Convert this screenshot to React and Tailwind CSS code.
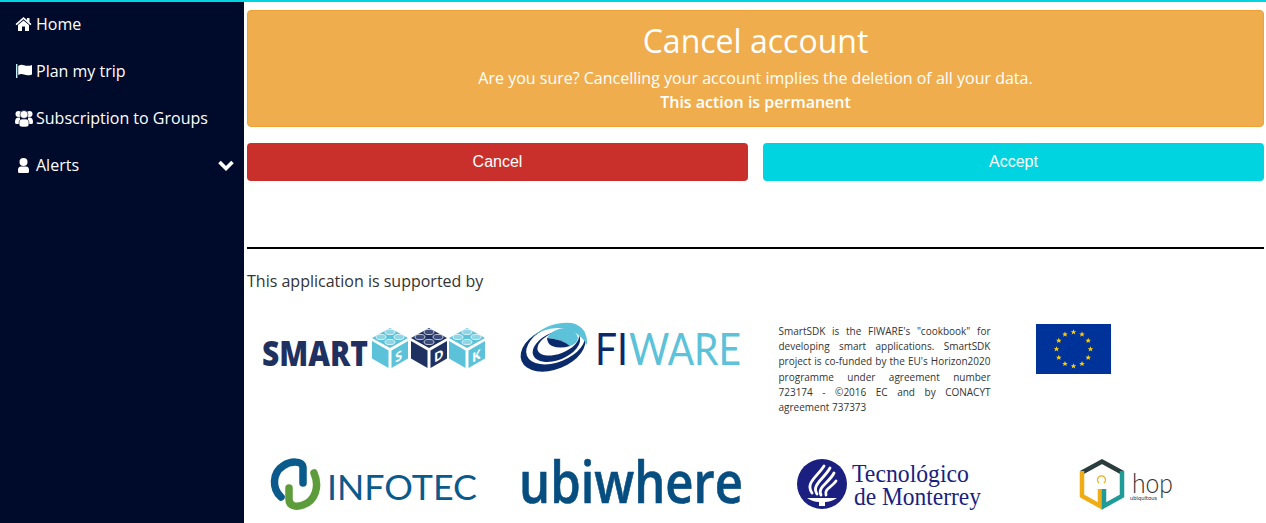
import React from "react";

// glyphicon-like menu icons, 20x20 box
const HomeIcon = () => (
  <svg width="20" height="20" viewBox="0 0 20 20" fill="currentColor">
    <path d="M9.5 3 L13 6 V4 H15.5 V8.2 L17.5 10 L16.4 11.2 L9.5 5.2 L2.6 11.2 L1.5 10 Z" />
    <path d="M4 11 L9.5 6.4 L15 11 V17 H11 V12.5 H8 V17 H4 Z" />
  </svg>
);

const FlagIcon = () => (
  <svg width="20" height="20" viewBox="0 0 20 20" fill="currentColor">
    <rect x="2" y="3" width="1.4" height="14" fill="#bfeff8" />
    <path d="M4.2 5 Q7 3 10 4.2 Q14 5.6 18 4 V13.4 Q14 15 10 13.6 Q7 12.4 4.2 14 Z" />
  </svg>
);

const UsersIcon = () => (
  <svg width="20" height="20" viewBox="0 0 20 20" fill="currentColor">
    <circle cx="4.5" cy="6" r="3" />
    <circle cx="15.5" cy="6" r="3" />
    <path d="M1 14 Q1 9.5 4.5 9.5 H6 V16 H2 Q1 16 1 14 Z" />
    <path d="M19 14 Q19 9.5 15.5 9.5 H14 V16 H18 Q19 16 19 14 Z" />
    <circle cx="10" cy="6.5" r="4" stroke="#000b2b" strokeWidth="0.6" />
    <path d="M5 16 Q5 11 8 11 H12 Q15 11 15 16 Q15 19 12 19 H8 Q5 19 5 16 Z" stroke="#000b2b" strokeWidth="0.6" />
  </svg>
);

const UserIcon = () => (
  <svg width="20" height="20" viewBox="0 0 20 20" fill="currentColor">
    <circle cx="9.5" cy="7" r="4" />
    <path d="M4 15 Q4 11.5 7 11.5 H12 Q15 11.5 15 15 V16.5 Q15 18 13.5 18 H5.5 Q4 18 4 16.5 Z" />
  </svg>
);

const menu = [
  { label: "Home", Icon: HomeIcon },
  { label: "Plan my trip", Icon: FlagIcon },
  { label: "Subscription to Groups", Icon: UsersIcon },
  { label: "Alerts", Icon: UserIcon, arrow: true },
];

function Sidebar() {
  return (
    <aside className="w-[244px] shrink-0 bg-[#000b2b] text-white">
      {menu.map(({ label, Icon, arrow }) => (
        <div key={label} className="flex h-[47px] items-start pt-[11px] text-[16px] leading-[22px]">
          <span className="flex h-[22px] w-[36px] shrink-0 items-center pl-[14px]">
            <Icon />
          </span>
          <span className="flex-1">{label}</span>
          {arrow && (
            <span className="flex h-[22px] items-center pr-[10px]">
              <svg width="16" height="11" viewBox="0 0 16 11" fill="none" stroke="currentColor" strokeWidth="3.6">
                <path d="M1.5 2 L8 8.5 L14.5 2" />
              </svg>
            </span>
          )}
        </div>
      ))}
    </aside>
  );
}

function Cube({ x, light, letter }) {
  const top = light ? "#5cc2d9" : "#1f3161";
  const stud = light ? "#8fd6e5" : "#3a4b7c";
  return (
    <g transform={`translate(${x} 0)`}>
      <polygon points="18,2 36,12 18,22 0,12" fill={top} />
      {[[18, 6], [9, 11], [27, 11], [18, 16]].map(([cx, cy]) => (
        <ellipse key={`${cx}-${cy}`} cx={cx} cy={cy} rx="5" ry="2.6" fill={stud} stroke="#ffffff" strokeWidth="0.7" />
      ))}
      <polygon points="0,15 16.5,24.5 16.5,42 0,32.5" fill={top} />
      <polygon points="19.5,24.5 36,15 36,32.5 19.5,42" fill={top} />
      <text
        transform="translate(23 37) skewY(-30)"
        fontFamily="'Open Sans', sans-serif"
        fontWeight="700"
        fontSize="13"
        fill="#ffffff"
      >
        {letter}
      </text>
    </g>
  );
}

function SmartLogo() {
  return (
    <svg width="224" height="44" viewBox="0 0 224 44" className="overflow-visible">
      <text
        x="0"
        y="40"
        fontFamily="'Open Sans', sans-serif"
        fontWeight="800"
        fontSize="36"
        fill="#1f3161"
        textLength="106"
        lengthAdjust="spacingAndGlyphs"
      >
        SMART
      </text>
      <Cube x={110} light letter="S" />
      <Cube x={149} letter="D" />
      <Cube x={187} light letter="K" />
    </svg>
  );
}

function FiwareLogo() {
  return (
    <svg width="222" height="54" viewBox="0 0 222 54" className="overflow-visible">
      <g transform="rotate(-22 34 27)">
        <ellipse cx="33" cy="27" rx="34" ry="21" fill="#0b2a6b" />
        <ellipse cx="37" cy="24" rx="31" ry="18" fill="#ffffff" />
        <ellipse cx="37" cy="26" rx="25" ry="14" fill="#0b2a6b" />
        <ellipse cx="40" cy="23.5" rx="22" ry="11" fill="#ffffff" />
      </g>
      <path d="M10 18 Q28 0 52 2 Q68 6 67 24 Q58 8 38 7 Q22 7 10 18 Z" fill="#5cc2d9" />
      <path d="M27 17 Q32 8 45 7 Q56 8 58 17 Q57 23 50 25 Q42 18 27 17 Z" fill="#5cc2d9" />
      <path d="M27 17 Q42 18 50 25 Q40 28 32 25 Q27 22 27 17 Z" fill="#0b2a6b" />
      <text
        x="75"
        y="44"
        fontFamily="Lato, sans-serif"
        fontWeight="400"
        fontSize="45"
        fill="#0b2a6b"
        textLength="33"
        lengthAdjust="spacingAndGlyphs"
      >
        FI
      </text>
      <text
        x="109"
        y="44"
        fontFamily="Lato, sans-serif"
        fontWeight="400"
        fontSize="45"
        fill="#5cc2d9"
        textLength="112"
        lengthAdjust="spacingAndGlyphs"
      >
        WARE
      </text>
    </svg>
  );
}

function EuFlag() {
  const stars = Array.from({ length: 12 }, (_, i) => {
    const a = (i * Math.PI) / 6;
    return { x: 37.5 + 17 * Math.sin(a), y: 25 - 17 * Math.cos(a) };
  });
  return (
    <svg width="75" height="50" viewBox="0 0 75 50">
      <rect width="75" height="50" fill="#003399" />
      {stars.map((s, i) => (
        <polygon
          key={i}
          transform={`translate(${s.x} ${s.y}) scale(1.4)`}
          points="0,-2 0.6,-0.6 2,-0.6 0.9,0.3 1.3,1.7 0,0.9 -1.3,1.7 -0.9,0.3 -2,-0.6 -0.6,-0.6"
          fill="#ffcc00"
        />
      ))}
    </svg>
  );
}

function InfotecLogo() {
  return (
    <svg width="208" height="52" viewBox="0 0 208 52" className="overflow-visible">
      <path d="M11 38 C2 30 2 14 13 7 C20 2 33 1 33 9 V24" fill="none" stroke="#0b5a8c" strokeWidth="7.5" strokeLinecap="round" />
      <path d="M19 29 V40 C19 48 27 48 33 46 C45 42 50 28 44 14" fill="none" stroke="#5d9c3a" strokeWidth="7.5" strokeLinecap="round" />
      <text
        x="57"
        y="41"
        fontFamily="Lato, sans-serif"
        fontWeight="400"
        fontSize="35"
        fill="#0b5a8c"
        textLength="150"
        lengthAdjust="spacingAndGlyphs"
      >
        INFOTEC
      </text>
    </svg>
  );
}

function UbiwhereLogo() {
  return (
    <svg width="226" height="52" viewBox="0 0 226 52" className="overflow-visible">
      <text
        x="0"
        y="44"
        fontFamily="'Open Sans', sans-serif"
        fontWeight="600"
        fontSize="57"
        fill="#064d80"
        stroke="#064d80"
        strokeWidth="0.6"
        textLength="224"
        lengthAdjust="spacingAndGlyphs"
      >
        ubiwhere
      </text>
    </svg>
  );
}

function TecLogo() {
  return (
    <svg width="186" height="56" viewBox="0 0 186 56" className="overflow-visible">
      <circle cx="24" cy="25" r="25" fill="#1a1f80" />
      <g fill="none" stroke="#ffffff" strokeWidth="2.8" strokeLinecap="round">
        <path d="M14 34 C7 24 19 18 26 7" />
        <path d="M19 35 C13 26 26 20 32 9" />
        <path d="M23 36 C19 28 31 24 36 14" />
        <path d="M28 36 C26 30 34 28 38 22" />
      </g>
      <path d="M9 39 H39 Q33 43 27 43 V47 H21 V43 Q15 43 9 39 Z" fill="#ffffff" />
      <text x="54" y="23" fontFamily="'Liberation Serif', serif" fontSize="25" fill="#1a1f80" textLength="117" lengthAdjust="spacingAndGlyphs">
        Tecnológico
      </text>
      <text x="56" y="46" fontFamily="'Liberation Serif', serif" fontSize="25" fill="#1a1f80" textLength="127" lengthAdjust="spacingAndGlyphs">
        de Monterrey
      </text>
    </svg>
  );
}

function HopLogo() {
  return (
    <svg width="96" height="52" viewBox="0 0 96 52" className="overflow-visible">
      <path d="M2 14 L23 2.5 L44 14" fill="none" stroke="#2b3c3d" strokeWidth="4.5" />
      <path d="M3 12 V37 L21 47 V30" fill="none" stroke="#f0ac14" strokeWidth="4.5" />
      <path d="M43 12 V37 L25 47 V30" fill="none" stroke="#1f9c97" strokeWidth="4.5" />
      <path d="M20 24 A4 4 0 1 1 25 24" fill="none" stroke="#f0ac14" strokeWidth="1.2" />
      <text x="53" y="34" fontFamily="Lato, sans-serif" fontWeight="300" fontSize="28" fill="#333333" textLength="41" lengthAdjust="spacingAndGlyphs">
        hop
      </text>
      <text x="51" y="41" fontFamily="Lato, sans-serif" fontSize="6" fill="#333333" textLength="27" lengthAdjust="spacingAndGlyphs">
        ubiquitous
      </text>
    </svg>
  );
}

export default function App() {
  return (
    <div className="flex h-[523px] flex-col overflow-hidden bg-white font-['Open_Sans',sans-serif] text-[#333333]">
      <div className="h-[2px] shrink-0 bg-[#00d4e0]" />
      <div className="flex min-h-0 flex-1">
        <Sidebar />
        <main className="min-w-0 flex-1 pl-[3px] pr-[2px] pt-[8px]">
          <div className="flex h-[117px] flex-col items-center rounded-[4px] border border-[#eea236] bg-[#f0ad4e] text-white">
            <h1 className="mt-[8px] text-[32px] leading-[44px]">Cancel account</h1>
            <p className="mt-[3px] text-[16px] leading-[24px]">
              Are you sure? Cancelling your account implies the deletion of all your data.
            </p>
            <p className="text-[16px] font-semibold leading-[24px]">This action is permanent</p>
          </div>

          <div className="mt-[16px] grid grid-cols-2 gap-[15px] font-['Liberation_Sans',sans-serif] text-[16px] text-white">
            <button className="h-[38px] rounded-[4px] bg-[#c9302c]">Cancel</button>
            <button className="h-[38px] rounded-[4px] bg-[#00d4e0]">Accept</button>
          </div>

          <hr className="mt-[66px] border-t-2 border-black" />

          <p className="mt-[21px] text-[16px] leading-[22px]">This application is supported by</p>

          <div className="mt-[22px] grid h-[80px] grid-cols-4 items-start">
            <div className="flex justify-center pt-[12px]"><SmartLogo /></div>
            <div className="flex justify-center pl-[6px] pt-[7px]"><FiwareLogo /></div>
            <p className="ml-[23px] w-[212px] pt-[10px] text-justify text-[10px] leading-[15.2px]">
              SmartSDK is the FIWARE's "cookbook" for developing smart applications. SmartSDK project is co-funded by the EU's Horizon2020 programme under agreement number 723174 - ©2016 EC and by CONACYT agreement 737373
            </p>
            <div className="pl-[26px] pt-[10px]"><EuFlag /></div>
          </div>

          <div className="mt-[65px] grid grid-cols-4 items-start">
            <div className="flex justify-center"><InfotecLogo /></div>
            <div className="flex justify-center pl-[8px]"><UbiwhereLogo /></div>
            <div className="flex justify-center pl-[17px]"><TecLogo /></div>
            <div className="flex justify-center pr-[20px]"><HopLogo /></div>
          </div>
        </main>
      </div>
    </div>
  );
}
